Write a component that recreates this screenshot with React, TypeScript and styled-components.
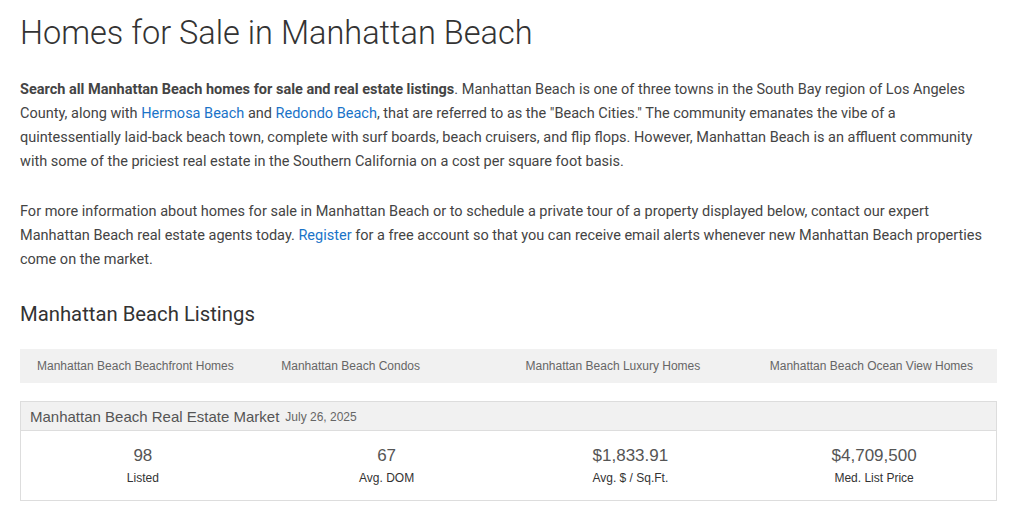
import React from "react";
import styled, { createGlobalStyle } from "styled-components";

const Global = createGlobalStyle`
  html, body { margin: 0; padding: 0; background: #fff; }
  body { font-family: Roboto, "Noto Sans", sans-serif; color: #444; }
`;

const Page = styled.main`
  width: 977px;
  margin-left: 20px;
  padding-top: 11px;
`;

const Title = styled.h1`
  font-family: Roboto, sans-serif;
  font-weight: 300;
  font-size: 32.5px;
  line-height: 44px;
  color: #333;
  margin: 0 0 23px;
`;

const Para = styled.p`
  font-size: 14.5px;
  line-height: 24px;
  color: #444;
  margin: 0 0 26px;
`;

const Link = styled.a`
  color: #1a73c8;
  text-decoration: none;
`;

const Subtitle = styled.h2`
  font-family: Roboto, sans-serif;
  font-weight: 400;
  font-size: 20.3px;
  line-height: 28px;
  color: #333;
  margin: 28px 0 21px;
`;

const Tabs = styled.nav`
  display: grid;
  grid-template-columns: repeat(4, 1fr);
  background: #f1f1f1;
  height: 34px;
  align-items: center;
  margin-bottom: 18px;
`;

const Tab = styled.a`
  font-family: "Liberation Sans", Arial, sans-serif;
  font-size: 12px;
  color: #666;
  padding-left: 17px;
  text-decoration: none;
`;

const Market = styled.section`
  border: 1px solid #ddd;
`;

const MarketHead = styled.header`
  background: #f1f1f1;
  border-bottom: 1px solid #ddd;
  height: 28px;
  display: flex;
  align-items: center;
  padding-left: 9px;
  gap: 6px;
  font-family: "Liberation Sans", Arial, sans-serif;
`;

const MarketTitle = styled.span`
  font-size: 15px;
  color: #555;
`;

const MarketDate = styled.span`
  font-size: 12px;
  color: #666;
  padding-top: 2px;
`;

const Stats = styled.div`
  display: grid;
  grid-template-columns: repeat(4, 1fr);
  padding: 14px 0 13px;
  font-family: "Liberation Sans", Arial, sans-serif;
`;

const Stat = styled.div`
  display: flex;
  flex-direction: column;
  align-items: center;
`;

const StatValue = styled.span`
  font-size: 17px;
  line-height: 22px;
  color: #555;
`;

const StatLabel = styled.span`
  font-size: 12px;
  line-height: 18px;
  margin-top: 2px;
  color: #333;
`;

const tabs = [
  "Manhattan Beach Beachfront Homes",
  "Manhattan Beach Condos",
  "Manhattan Beach Luxury Homes",
  "Manhattan Beach Ocean View Homes",
];

const stats = [
  { v: "98", l: "Listed" },
  { v: "67", l: "Avg. DOM" },
  { v: "$1,833.91", l: "Avg. $ / Sq.Ft." },
  { v: "$4,709,500", l: "Med. List Price" },
];

export default function App() {
  return (
    <>
      <Global />
      <Page>
        <Title>Homes for Sale in Manhattan Beach</Title>
        <Para>
          <strong>Search all Manhattan Beach homes for sale and real estate listings</strong>. Manhattan Beach is one of three towns in the South Bay region of Los Angeles County, along with{" "}
          <Link href="#">Hermosa Beach</Link> and <Link href="#">Redondo Beach</Link>, that are referred to as the "Beach Cities." The community emanates the vibe of a quintessentially laid-back beach town, complete with surf boards, beach cruisers, and flip flops. However, Manhattan Beach is an affluent community with some of the priciest real estate in the Southern California on a cost per square foot basis.
        </Para>
        <Para>
          For more information about homes for sale in Manhattan Beach or to schedule a private tour of a property displayed below, contact our expert Manhattan Beach real estate agents today.{" "}
          <Link href="#">Register</Link> for a free account so that you can receive email alerts whenever new Manhattan Beach properties come on the market.
        </Para>
        <Subtitle>Manhattan Beach Listings</Subtitle>
        <Tabs>
          {tabs.map((t) => (
            <Tab key={t} href="#">{t}</Tab>
          ))}
        </Tabs>
        <Market>
          <MarketHead>
            <MarketTitle>Manhattan Beach Real Estate Market</MarketTitle>
            <MarketDate>July 26, 2025</MarketDate>
          </MarketHead>
          <Stats>
            {stats.map((s) => (
              <Stat key={s.l}>
                <StatValue>{s.v}</StatValue>
                <StatLabel>{s.l}</StatLabel>
              </Stat>
            ))}
          </Stats>
        </Market>
      </Page>
    </>
  );
}
